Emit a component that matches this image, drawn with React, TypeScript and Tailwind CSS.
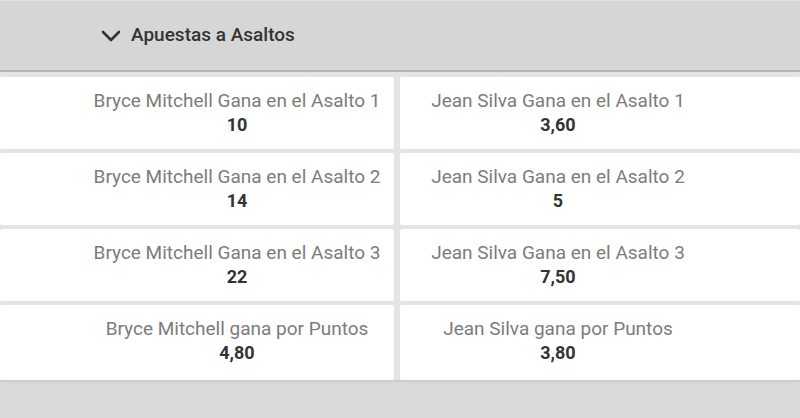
import React from "react";

type Bet = { label: string; odds: string };

const rows: [Bet, Bet][] = [
  [
    { label: "Bryce Mitchell Gana en el Asalto 1", odds: "10" },
    { label: "Jean Silva Gana en el Asalto 1", odds: "3,60" },
  ],
  [
    { label: "Bryce Mitchell Gana en el Asalto 2", odds: "14" },
    { label: "Jean Silva Gana en el Asalto 2", odds: "5" },
  ],
  [
    { label: "Bryce Mitchell Gana en el Asalto 3", odds: "22" },
    { label: "Jean Silva Gana en el Asalto 3", odds: "7,50" },
  ],
  [
    { label: "Bryce Mitchell gana por Puntos", odds: "4,80" },
    { label: "Jean Silva gana por Puntos", odds: "3,80" },
  ],
];

function BetCell({ bet, side }: { bet: Bet; side: "left" | "right" }) {
  return (
    <div
      className={`bg-white rounded-[2px] flex flex-col items-center pt-[12px] ${
        side === "left" ? "pl-[80px]" : "pr-[84px]"
      }`}
    >
      <span className="text-[19px] leading-6 text-[#7c7c7c]">{bet.label}</span>
      <span className="text-[18px] leading-6 font-bold text-[#333]">{bet.odds}</span>
    </div>
  );
}

export default function App() {
  return (
    <div
      className="w-[800px] h-[418px] overflow-hidden bg-[#e4e4e4] flex flex-col"
      style={{ fontFamily: "Roboto, 'Liberation Sans', sans-serif" }}
    >
      <div className="h-[72px] shrink-0 bg-[#d6d6d6] border-t border-[#e2e2e2] border-b-2 border-b-[#b4b4b4] flex items-center pl-[101px] gap-[10px]">
        <svg width="20" height="14" viewBox="0 0 20 14" className="mt-[1px]">
          <polyline
            points="2,3 10,11 18,3"
            fill="none"
            stroke="#333"
            strokeWidth="2.6"
            strokeLinecap="round"
            strokeLinejoin="round"
          />
        </svg>
        <span className="text-[19px] font-medium text-[#333]">Apuestas a Asaltos</span>
      </div>

      <div className="pt-[5px] grid grid-cols-[394px_1fr] grid-rows-[72px_72px_72px_75px] gap-x-[6px] gap-y-[4px]">
        {rows.map(([l, r], i) => (
          <React.Fragment key={i}>
            <BetCell bet={l} side="left" />
            <BetCell bet={r} side="right" />
          </React.Fragment>
        ))}
      </div>

      <div className="flex-1 bg-[#d9d9d9] border-t-2 border-[#cdcdcd]" />
    </div>
  );
}
